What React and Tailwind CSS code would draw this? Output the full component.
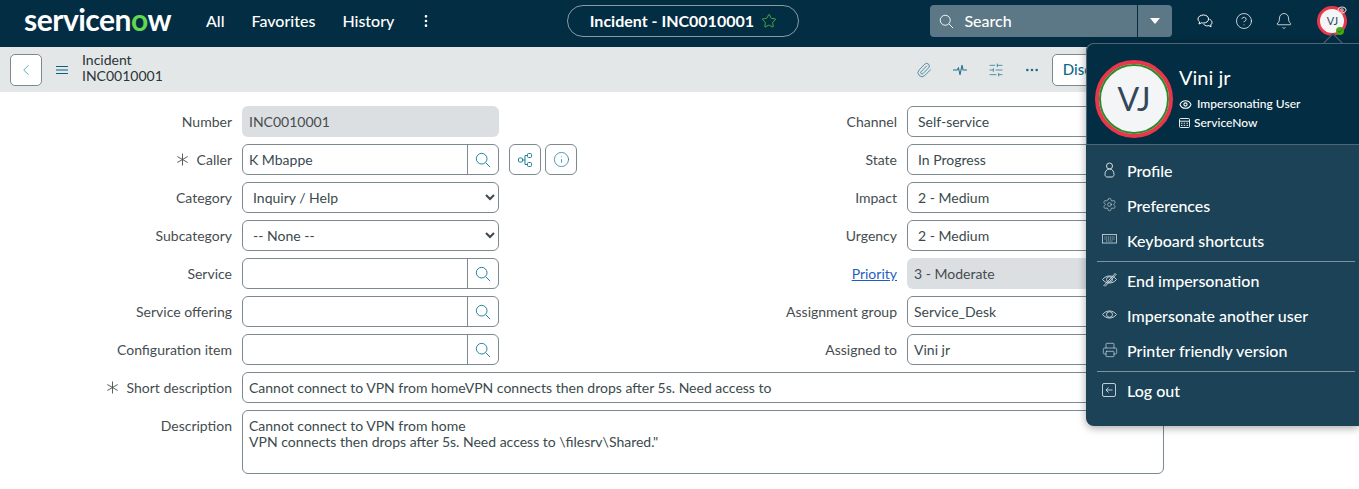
import {
  ChevronLeft,
  MoreVertical,
  Star,
  Bell,
  Paperclip,
  SlidersHorizontal,
  MoreHorizontal,
  Settings,
  Printer,
  CircleHelp,
  Info,
  Check,
  Eye,
} from "lucide-react";

function SearchIcon({ size = 18 }) {
  return (
    <svg width={size} height={size} viewBox="0 0 18 18" fill="none" stroke="currentColor" strokeWidth="1.1">
      <circle cx="7.5" cy="7.5" r="6" />
      <path d="M12 12l5 5" />
    </svg>
  );
}

function StarBurst() {
  return (
    <svg width="13" height="13" viewBox="0 0 13 13" fill="none" stroke="currentColor" strokeWidth="0.9">
      <path d="M6.5 0.5v12M1.3 3.5l10.4 6M1.3 9.5l10.4-6" />
    </svg>
  );
}

function TreeIcon() {
  return (
    <svg width="14" height="14" viewBox="0 0 14 14" fill="none" stroke="currentColor" strokeWidth="1">
      <rect x="0.5" y="5" width="4" height="4" rx="1" />
      <rect x="9.5" y="0.5" width="4" height="4" rx="1" />
      <rect x="9.5" y="9.5" width="4" height="4" rx="1" />
      <path d="M4.5 7h2.5M7 2.5v9M7 2.5h2.5M7 11.5h2.5" />
    </svg>
  );
}

function Pulse() {
  return (
    <svg width="16" height="16" viewBox="0 0 16 16" fill="none" stroke="currentColor" strokeWidth="1.1">
      <path d="M1 8h4l1.5-2 1.5 7 2-10 1 5h4" />
    </svg>
  );
}

function Chats() {
  return (
    <svg width="16" height="16" viewBox="0 0 16 16" fill="none" stroke="currentColor" strokeWidth="1">
      <path d="M6.5 2c-3 0-5.500 1.700-5.500 4 0 1.200.6 2.200 1.600 2.900L2 11l2.500-1.200c.6.200 1.300.2 2 .2 3 0 5-1.700 5-4s-2-4-5-4z" />
      <path d="M12.500 6.300c1.500.6 2.500 1.800 2.500 3.200 0 1-.5 1.800-1.300 2.400l.4 1.800-2.200-1c-.5.100-1 .2-1.500.2-1.600 0-3-.7-3.700-1.700" />
    </svg>
  );
}

function Person() {
  return (
    <svg width="15" height="16" viewBox="0 0 15 16" fill="none" stroke="currentColor" strokeWidth="1">
      <circle cx="7.500" cy="4" r="3" />
      <path d="M7.500 7c-3 0-4.500 2.500-4.500 5.500 0 1.500 1 2.500 2 2.500h5c1 0 2-1 2-2.500C12 9.500 10.500 7 7.500 7z" />
    </svg>
  );
}

function KeyboardIcon({ size = 15 }) {
  return (
    <svg width={size} height={size * 0.67} viewBox="0 0 15 10" fill="none" stroke="currentColor" strokeWidth="0.8">
      <rect x="0.5" y="0.5" width="14" height="8.500" />
      <path d="M2.500 3h10M2.500 5h10M4 7h7" strokeDasharray="1 0.800" />
    </svg>
  );
}

function Building() {
  return (
    <svg width="11" height="10" viewBox="0 0 11 10" fill="none" stroke="currentColor" strokeWidth="0.9">
      <rect x="0.500" y="0.500" width="10" height="9" rx="1" />
      <path d="M0.500 3.200h10M2 5.200h1.500M4.700 5.200h1.500M7.500 5.200h1.500M2 7.400h1.500M4.700 7.400h1.500M7.500 7.400h1.500" />
    </svg>
  );
}

function EyeFlat() {
  return (
    <svg width="15" height="15" viewBox="0 0 15 15" fill="none" stroke="currentColor" strokeWidth="0.9">
      <path d="M0.500 7.500C2.500 5 5 4 7.500 4s5 1 7 3.500C12.500 10 10 11 7.500 11s-5-1-7-3.500z" />
      <ellipse cx="7.500" cy="7.500" rx="3" ry="2.800" />
    </svg>
  );
}

function EyeSlash() {
  return (
    <svg width="15" height="15" viewBox="0 0 15 15" fill="none" stroke="currentColor" strokeWidth="0.9">
      <path d="M0.500 7.500C2.500 5 5 4 7.500 4s5 1 7 3.500C12.500 10 10 11 7.500 11s-5-1-7-3.500z" />
      <ellipse cx="7.500" cy="7.500" rx="3" ry="2.800" />
      <path d="M1.500 14L13.500 1M3 14.500L14.500 2" />
    </svg>
  );
}

function LogOutBox() {
  return (
    <svg width="14" height="14" viewBox="0 0 14 14" fill="none" stroke="currentColor" strokeWidth="0.9">
      <rect x="0.500" y="0.500" width="13" height="13" rx="1.500" />
      <path d="M10.500 7h-6.500M6.500 4.500L4 7l2.500 2.500" />
    </svg>
  );
}

const menuGroups = [
  [
    { icon: <Person />, label: "Profile" },
    { icon: <Settings size={15} strokeWidth={1} />, label: "Preferences" },
    { icon: <KeyboardIcon />, label: "Keyboard shortcuts" },
  ],
  [
    { icon: <EyeSlash />, label: "End impersonation" },
    { icon: <EyeFlat />, label: "Impersonate another user" },
    { icon: <Printer size={16} strokeWidth={1} />, label: "Printer friendly version" },
  ],
  [{ icon: <LogOutBox />, label: "Log out" }],
];

function Label({ children, required, link }) {
  return (
    <div className="w-[232px] shrink-0 flex items-center justify-end gap-[8px] text-[14px] text-[#454d50]">
      {required && <StarBurst />}
      {link ? <a className="text-[#1f5fbf] underline">{children}</a> : <span>{children}</span>}
    </div>
  );
}

function ReadOnly({ value }) {
  return (
    <div className="h-[31px] w-[257px] bg-[#dcdfe2] rounded-[6px] flex items-center px-[7px] text-[14px] text-[#454d50]">
      {value}
    </div>
  );
}

function Lookup({ value }) {
  return (
    <div className="h-[31px] w-[257px] border border-[#7c8a90] rounded-[6px] flex text-[14px] text-[#3a4a4d]">
      <div className="flex-1 flex items-center px-[6px]">{value}</div>
      <div className="w-[31px] border-l border-[#7c8a90] flex items-center justify-center text-[#1f7f9f]">
        <SearchIcon size={16} />
      </div>
    </div>
  );
}

function Choice({ value }) {
  return (
    <select
      defaultValue={value}
      className="h-[31px] w-[257px] border border-[#7c8a90] rounded-[6px] bg-white px-[6px] text-[14px] text-[#3a4a4d]"
    >
      <option>{value}</option>
    </select>
  );
}

function Row({ label, required, link, children }) {
  return (
    <div className="flex gap-[10px]">
      <Label required={required} link={link}>
        {label}
      </Label>
      {children}
    </div>
  );
}

export default function App() {
  return (
    <div className="relative w-[1359px] h-[489px] overflow-hidden bg-white font-['Lato','Open_Sans',sans-serif]">
      {/* top nav */}
      <div className="h-[47px] pb-[5px] bg-[#032d42] flex items-center text-white">
        <div className="ml-[24px] w-[149px] whitespace-nowrap text-[30px] leading-none font-bold tracking-[-0.5px] -mt-[4px]">
          servicen<span className="text-[#62d84e]">o</span>w
        </div>
        <div className="ml-[33px] flex items-center gap-[27px] text-[16px] font-medium">
          <span>All</span>
          <span>Favorites</span>
          <span>History</span>
          <MoreVertical size={16} className="-ml-[3px]" />
        </div>
        <div className="ml-[133px] w-[232px] h-[32px] rounded-full border border-[#8a9ba5] flex items-center justify-center gap-[7px] text-[16px] font-bold">
          Incident - INC0010001
          <Star size={16} strokeWidth={1.25} className="text-[#4cc43c]" />
        </div>
        <div className="ml-[131px] w-[242px] h-[32px] rounded-[4px] bg-[#5c7786] flex items-center">
          <div className="flex-1 flex items-center gap-[10px] pl-[9px] text-[16px] font-medium">
            <SearchIcon size={15} />
            Search
          </div>
          <div className="w-[35px] h-full border-l border-[#032d42] flex items-center justify-center">
            <div className="w-0 h-0 border-x-[5px] border-x-transparent border-t-[6px] border-t-white"></div>
          </div>
        </div>
        <div className="ml-[25px] flex items-center gap-[22px]">
          <Chats />
          <CircleHelp size={18} strokeWidth={1} />
          <Bell size={18} strokeWidth={1} />
        </div>
        <div className="relative ml-[24px] w-[30px] h-[30px] rounded-full border-[3px] border-[#e8374a] bg-[#f3f5f7] flex items-center justify-center text-[11px] text-[#32475a]">
          VJ
          <Eye size={10} strokeWidth={2.5} className="absolute -top-[4px] -right-[3px] text-[#f6c6cc]" />
          <div className="absolute -bottom-[2px] right-0 w-[8px] h-[8px] rounded-full bg-[#46a80d] flex items-center justify-center">
            <Check size={6} strokeWidth={3} />
          </div>
        </div>
      </div>

      {/* record header */}
      <div className="h-[45px] bg-[#e4e7e8] flex items-center">
        <button className="ml-[10px] w-[32px] h-[32px] bg-white border border-[#7c8a90] rounded-[5px] flex items-center justify-center text-[#2f8cab]">
          <ChevronLeft size={18} strokeWidth={1} />
        </button>
        <svg width="12" height="10" viewBox="0 0 12 10" stroke="#0e5f7e" className="ml-[14px]">
          <path d="M0 1.500h12M0 5h12M0 8.500h12" />
        </svg>
        <div className="ml-[14px] -mt-[4px] text-[14px] leading-[16px] text-[#2c3436]">
          <div>Incident</div>
          <div>INC0010001</div>
        </div>
        <div className="ml-[753px] flex items-center gap-[20px] text-[#1f6f8f]">
          <Paperclip size={16} strokeWidth={1.1} />
          <Pulse />
          <SlidersHorizontal size={16} strokeWidth={1.1} />
          <MoreHorizontal size={16} />
        </div>
        <button className="ml-[12px] h-[32px] px-[10px] bg-white border border-[#7c8a90] rounded-[5px] text-[15px] font-medium text-[#0e6a8a]">
          Discard
        </button>
      </div>

      {/* form */}
      <div className="pt-[14px] flex flex-col gap-[7px]">
        <div className="grid grid-cols-[665px_499px] gap-y-[7px]">
          <Row label="Number">
            <ReadOnly value="INC0010001" />
          </Row>
          <Row label="Channel">
            <Choice value="Self-service" />
          </Row>

          <div className="flex">
            <Row label="Caller" required>
              <Lookup value="K Mbappe" />
            </Row>
            <div className="ml-[10px] flex gap-[4px] text-[#1f7f9f]">
              <button className="w-[32px] h-[31px] border border-[#7c8a90] rounded-[6px] flex items-center justify-center">
                <TreeIcon />
              </button>
              <button className="w-[32px] h-[31px] border border-[#7c8a90] rounded-[6px] flex items-center justify-center">
                <Info size={17} strokeWidth={1.1} />
              </button>
            </div>
          </div>
          <Row label="State">
            <Choice value="In Progress" />
          </Row>

          <Row label="Category">
            <Choice value="Inquiry / Help" />
          </Row>
          <Row label="Impact">
            <Choice value="2 - Medium" />
          </Row>

          <Row label="Subcategory">
            <Choice value="-- None --" />
          </Row>
          <Row label="Urgency">
            <Choice value="2 - Medium" />
          </Row>

          <Row label="Service">
            <Lookup />
          </Row>
          <Row label="Priority" link>
            <ReadOnly value="3 - Moderate" />
          </Row>

          <Row label="Service offering">
            <Lookup />
          </Row>
          <Row label="Assignment group">
            <Lookup value="Service_Desk" />
          </Row>

          <Row label="Configuration item">
            <Lookup />
          </Row>
          <Row label="Assigned to">
            <Lookup value="Vini jr" />
          </Row>
        </div>

        <div className="flex gap-[10px]">
          <Label required>Short description</Label>
          <div className="h-[31px] w-[922px] border border-[#7c8a90] rounded-[6px] flex items-center px-[6px] text-[14px] text-[#3a4a4d]">
            Cannot connect to VPN from homeVPN connects then drops after 5s. Need access to
          </div>
        </div>

        <div className="flex gap-[10px]">
          <div className="w-[232px] pt-[5px] text-right text-[14px] text-[#454d50]">Description</div>
          <div className="h-[64px] w-[922px] border border-[#7c8a90] rounded-[6px] px-[6px] pt-[7px] text-[14px] leading-[16px] text-[#3a4a4d]">
            <div>Cannot connect to VPN from home</div>
            <div>VPN connects then drops after 5s. Need access to \filesrv\Shared."</div>
          </div>
        </div>
      </div>

      {/* user popover */}
      <div className="absolute left-[1086px] top-[43px] w-[273px] h-[383px] rounded-l-[8px] bg-[#1c4257] shadow-[0_2px_8px_rgba(0,0,0,0.35)] text-white">
        <div className="absolute -top-[7px] left-[240px] w-[14px] h-[14px] rotate-45 bg-[#032d42] border-l border-t border-[#4d6675]"></div>
        <div className="relative h-[102px] rounded-tl-[8px] bg-[#032d42] border-t border-l border-b border-[#4d6675] flex">
          <div className="mt-[16px] ml-[8px] w-[78px] h-[78px] rounded-full border-4 border-[#e8374a] bg-[#f3f5f7] shrink-0">
            <div className="w-full h-full rounded-full border-2 border-[#2f8a2a] flex items-center justify-center text-[32px] text-[#32475a]">
              VJ
            </div>
          </div>
          <div className="ml-[6px] pt-[21px]">
            <div className="text-[20px] leading-[24px]">Vini jr</div>
            <div className="mt-[7px] flex items-center gap-[5px] text-[12px] font-medium leading-[16px]">
              <Eye size={13} />
              Impersonating User
            </div>
            <div className="mt-[3px] flex items-center gap-[4px] text-[12px] font-medium leading-[16px]">
              <Building />
              ServiceNow
            </div>
          </div>
        </div>
        <div className="pl-[11px] pr-[4px] pt-[9px]">
          {menuGroups.map((group, i) => (
            <div key={i} className={i > 0 ? "border-t border-[#7d929e] pt-[2px] mt-[2px]" : ""}>
              {group.map(({ icon, label }) => (
                <div key={label} className="h-[35px] pb-[2px] flex items-center text-[16px] font-medium">
                  <div className="w-[30px] pl-[5px] shrink-0 flex items-center text-[#d5dde2] -mt-[2px]">{icon}</div>
                  {label}
                </div>
              ))}
            </div>
          ))}
        </div>
      </div>
    </div>
  );
}
